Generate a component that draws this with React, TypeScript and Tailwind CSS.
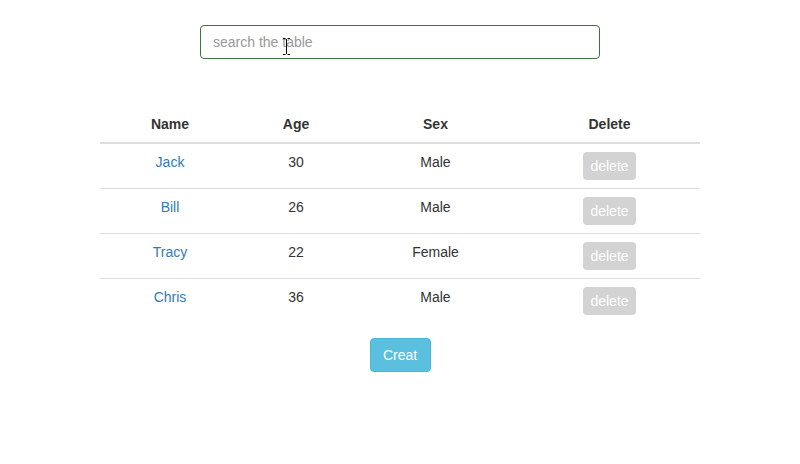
import React from "react";

const rows = [
  { name: "Jack", age: 30, sex: "Male" },
  { name: "Bill", age: 26, sex: "Male" },
  { name: "Tracy", age: 22, sex: "Female" },
  { name: "Chris", age: 36, sex: "Male" },
];

export default function App() {
  return (
    <div
      className="min-h-[464px] w-[800px] bg-white text-[14px] leading-[20px] text-[#333]"
      style={{ fontFamily: '"Liberation Sans", Arial, sans-serif' }}
    >
      <div className="pt-[25px] flex justify-center">
        <div className="relative">
          <input
            className="w-[400px] h-[34px] rounded-[4px] border border-[#3c763d] px-[12px] text-[14px] outline-none placeholder:text-[#999]"
            placeholder="search the table"
          />
          <svg
            className="absolute left-[83px] top-[13px]"
            width="7"
            height="18"
            viewBox="0 0 7 18"
          >
            <path d="M0 0.5H2.5M4.5 0.5H7M0 16.5H2.5M4.5 16.5H7M3.5 1V16" stroke="#000" strokeWidth="1" fill="none" />
          </svg>
        </div>
      </div>
      <div className="mt-[47px] flex justify-center">
        <table className="w-[600px] border-collapse">
          <thead>
            <tr>
              <th className="w-[140px] p-[8px] font-bold text-center border-b-2 border-[#ddd]">Name</th>
              <th className="w-[112px] p-[8px] font-bold text-center border-b-2 border-[#ddd]">Age</th>
              <th className="w-[167px] p-[8px] font-bold text-center border-b-2 border-[#ddd]">Sex</th>
              <th className="w-[181px] p-[8px] font-bold text-center border-b-2 border-[#ddd]">Delete</th>
            </tr>
          </thead>
          <tbody>
            {rows.map((r, i) => (
              <tr key={r.name}>
                <td className={`p-[8px] align-top text-center text-[#337ab7] ${i < 3 ? "border-b border-[#ddd]" : ""}`}>{r.name}</td>
                <td className={`p-[8px] align-top text-center ${i < 3 ? "border-b border-[#ddd]" : ""}`}>{r.age}</td>
                <td className={`p-[8px] align-top text-center ${i < 3 ? "border-b border-[#ddd]" : ""}`}>{r.sex}</td>
                <td className={`p-[8px] align-top text-center ${i < 3 ? "border-b border-[#ddd]" : ""}`}>
                  <button className="h-[28px] w-[53px] rounded-[4px] bg-[#d3d3d3] text-white text-[14px] leading-[28px]">
                    delete
                  </button>
                </td>
              </tr>
            ))}
          </tbody>
        </table>
      </div>
      <div className="mt-[15px] flex justify-center">
        <button className="h-[34px] w-[61px] rounded-[4px] border border-[#46b8da] bg-[#5bc0de] text-white text-[14px]">
          Creat
        </button>
      </div>
    </div>
  );
}
